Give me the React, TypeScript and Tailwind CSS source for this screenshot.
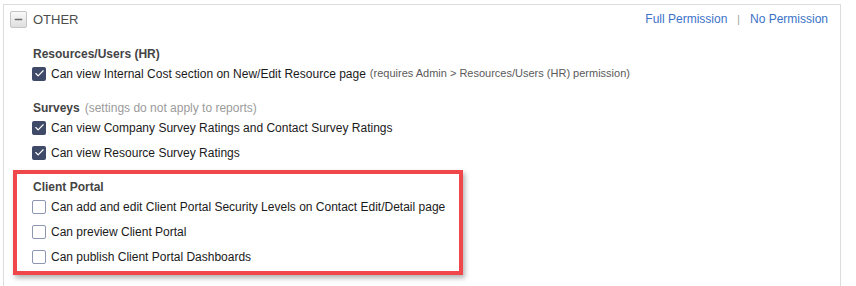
import { Check, Minus } from "lucide-react";

type Item = { label: string; note?: string; checked: boolean };

const sections: { title: string; hint?: string; items: Item[] }[] = [
  {
    title: "Resources/Users (HR)",
    items: [
      {
        label: "Can view Internal Cost section on New/Edit Resource page",
        note: "(requires Admin > Resources/Users (HR) permission)",
        checked: true,
      },
    ],
  },
  {
    title: "Surveys",
    hint: "(settings do not apply to reports)",
    items: [
      { label: "Can view Company Survey Ratings and Contact Survey Ratings", checked: true },
      { label: "Can view Resource Survey Ratings", checked: true },
    ],
  },
  {
    title: "Client Portal",
    items: [
      { label: "Can add and edit Client Portal Security Levels on Contact Edit/Detail page", checked: false },
      { label: "Can preview Client Portal", checked: false },
      { label: "Can publish Client Portal Dashboards", checked: false },
    ],
  },
];

function Checkbox({ checked }: { checked: boolean }) {
  if (checked) {
    return (
      <span className="w-[14px] h-[14px] rounded-[2px] bg-[#3e4a68] flex items-center justify-center shrink-0">
        <Check size={11} strokeWidth={2.5} className="text-white" />
      </span>
    );
  }
  return (
    <span className="w-[14px] h-[14px] rounded-[2px] border border-[#8d97b3] bg-white shrink-0" />
  );
}

export default function App() {
  return (
    <div
      className="w-[856px] h-[286px] bg-white overflow-hidden relative pt-[4px] pl-[3px]"
      style={{ fontFamily: '"Liberation Sans", Arial, sans-serif' }}
    >
      <div className="w-[838px] h-[300px] border border-[#dcdcdc]">
        {/* Header */}
        <div className="flex items-center justify-between pt-[6px] pl-[6px] pr-[12px]">
          <div className="flex items-center gap-[6px]">
            <span className="w-[17px] h-[17px] border border-[#c4c4c4] rounded-[2px] bg-gradient-to-b from-[#fafafa] to-[#dedede] flex items-center justify-center">
              <Minus size={11} strokeWidth={3} className="text-[#6b6b6b]" />
            </span>
            <span className="text-[13px] text-[#4d4d4d] leading-[17px]">OTHER</span>
          </div>
          <div className="flex items-center gap-[10px] text-[12px] text-[#3b73c8] leading-[17px]">
            <span>Full Permission</span>
            <span className="text-[#9a9a9a] text-[10px]">|</span>
            <span>No Permission</span>
          </div>
        </div>

        {/* Sections */}
        <div className="pl-[28px] pt-[19px] flex flex-col gap-[15px]">
          {sections.map((section) => (
            <div key={section.title} className="flex flex-col">
              <div className="h-[14px] leading-[14px] text-[12px] pl-[1px]">
                <span className="font-bold text-[#444]">{section.title}</span>
                {section.hint && (
                  <span className="text-[#9b9b9b] ml-[5px]">{section.hint}</span>
                )}
              </div>
              {section.items.map((item) => (
                <div key={item.label} className="h-[25px] flex items-center gap-[5px]">
                  <Checkbox checked={item.checked} />
                  <span className="text-[12px] text-[#1a1a1a]">{item.label}</span>
                  {item.note && (
                    <span className="text-[11px] text-[#5a5a5a] -ml-[1px]">{item.note}</span>
                  )}
                </div>
              ))}
            </div>
          ))}
        </div>
      </div>

      {/* Annotation highlight */}
      <div className="absolute left-[13px] top-[170px] w-[450px] h-[105px] border-4 border-[#f0474a] shadow-[2px_3px_5px_rgba(0,0,0,0.3)]" />
    </div>
  );
}
